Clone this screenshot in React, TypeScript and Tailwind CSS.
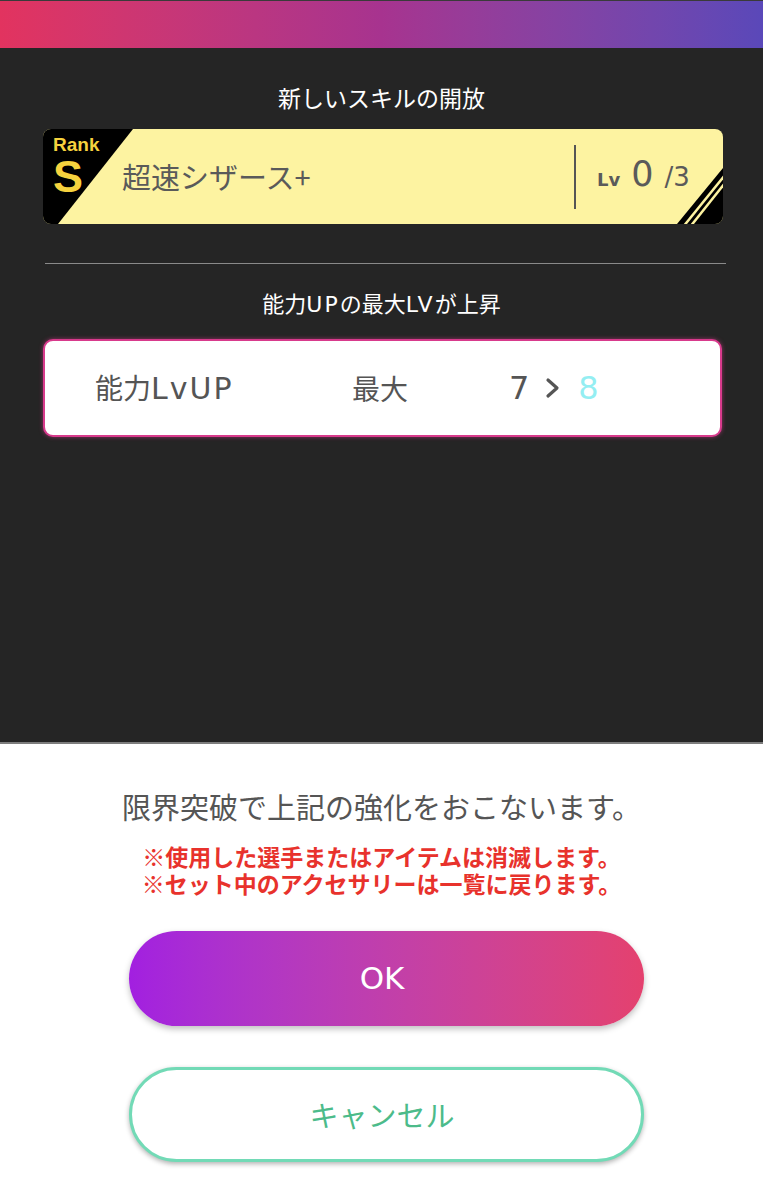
const jp = { fontFamily: '"Noto Sans CJK JP", "Noto Sans", sans-serif' };
const wide = { fontFamily: '"DejaVu Sans", "Noto Sans", sans-serif' };

function RankCorner() {
  return (
    <svg className="absolute left-0 top-0 h-full" width="96" viewBox="0 0 96 95" preserveAspectRatio="none">
      <polygon points="0,0 90,0 15,95 0,95" fill="#000" />
    </svg>
  );
}

function StripeCorner() {
  return (
    <svg className="absolute right-0 bottom-0" width="50" height="56" viewBox="0 0 50 56">
      <polygon points="50,0 50,56 4,56" fill="#000" />
      <line x1="52" y1="7" x2="10" y2="59" stroke="#fdf3a1" strokeWidth="2.5" />
      <line x1="52" y1="15" x2="17" y2="59" stroke="#fdf3a1" strokeWidth="2.5" />
    </svg>
  );
}

function SkillCard() {
  return (
    <div className="relative mx-[43px] flex h-[95px] w-[680px] items-center overflow-hidden rounded-lg bg-[#fdf3a1]">
      <RankCorner />
      <div className="relative flex w-[79px] flex-col self-start pl-[10px] pt-[6px] font-bold leading-none text-[#f6d23e]" style={{ fontFamily: '"Liberation Sans", sans-serif' }}>
        <span className="text-[19px] leading-[20px]">Rank</span>
        <span className="text-[45px] leading-[44px]">S</span>
      </div>
      <div className="relative w-[452px] text-[29px] text-[#5a5a5a]" style={jp}>
        超速シザース+
      </div>
      <div className="h-[64px] w-[2px] bg-[#555]" />
      <div className="ml-[21px] flex items-baseline text-[#5a5a5a]" style={wide}>
        <span className="text-[18px] font-bold">Lv</span>
        <span className="ml-[11px] text-[35px] leading-none">0</span>
        <span className="ml-[11px] text-[26px]">/3</span>
      </div>
      <StripeCorner />
    </div>
  );
}

function MaxLevelCard() {
  return (
    <div className="mx-[43px] flex h-[98px] w-[679px] items-center rounded-[10px] border-2 border-[#d83a8c] bg-white pl-[50px] text-[28px] text-[#555] shadow-[0_0_4px_rgba(216,58,140,0.6)]" style={jp}>
      <span className="w-[257px]">
        能力<span className="text-[30px] tracking-[2px]" style={wide}>LvUP</span>
      </span>
      <span className="w-[157px]">最大</span>
      <span className="flex items-center text-[32px]" style={wide}>
        <span>7</span>
        <svg className="ml-[16px]" width="15" height="22" viewBox="0 0 15 22">
          <path d="M3 3 L12 11 L3 19" fill="none" stroke="#555" strokeWidth="3.2" strokeLinecap="round" strokeLinejoin="round" />
        </svg>
        <span className="ml-[18px] text-[#94eef2]">8</span>
      </span>
    </div>
  );
}

export default function App() {
  return (
    <div className="flex h-[1200px] w-[763px] flex-col overflow-hidden bg-white" style={jp}>
      <div className="h-[48px] border-t border-[#3a3a3a] bg-gradient-to-r from-[#e2335f] via-[#a7338f] to-[#5a48b9]" />
      <div className="flex h-[694px] flex-col bg-[#252525] pt-[34px]">
        <h2 className="text-center text-[23px] leading-[30px] text-white">新しいスキルの開放</h2>
        <div className="mt-[17px]">
          <SkillCard />
        </div>
        <div className="ml-[45px] mt-[39px] h-px w-[681px] bg-[#8a8a8a]" />
        <h2 className="mt-[23px] text-center text-[22px] leading-[30px] text-white">
          能力<span className="tracking-[2px]" style={wide}>UP</span>の最大<span className="tracking-[2px]" style={wide}>LV</span>が上昇
        </h2>
        <div className="mt-[19px]">
          <MaxLevelCard />
        </div>
      </div>
      <div className="flex flex-1 flex-col items-center border-t-2 border-[#7d7d7d] bg-white pt-[42px]">
        <p className="text-[29px] leading-[40px] text-[#555]">限界突破で上記の強化をおこないます。</p>
        <div className="mt-[17px] text-center text-[23px] font-bold leading-[27px] text-[#e8322c]">
          <p>※使用した選手またはアイテムは消滅します。</p>
          <p>※セット中のアクセサリーは一覧に戻ります。</p>
        </div>
        <button className="ml-[9px] mt-[34px] flex h-[95px] w-[515px] items-center justify-center rounded-full bg-gradient-to-r from-[#a21fe0] to-[#e4416e] pr-[8px] text-[31px] text-white shadow-[0_3px_6px_rgba(0,0,0,0.25)]" style={wide}>
          OK
        </button>
        <button className="ml-[9px] mt-[41px] flex h-[95px] w-[515px] items-center justify-center rounded-full border-[3px] border-[#72dab6] bg-white pr-[8px] text-[29px] text-[#4cbb8a] shadow-[0_2px_5px_rgba(0,0,0,0.3)]" style={jp}>
          キャンセル
        </button>
      </div>
    </div>
  );
}
